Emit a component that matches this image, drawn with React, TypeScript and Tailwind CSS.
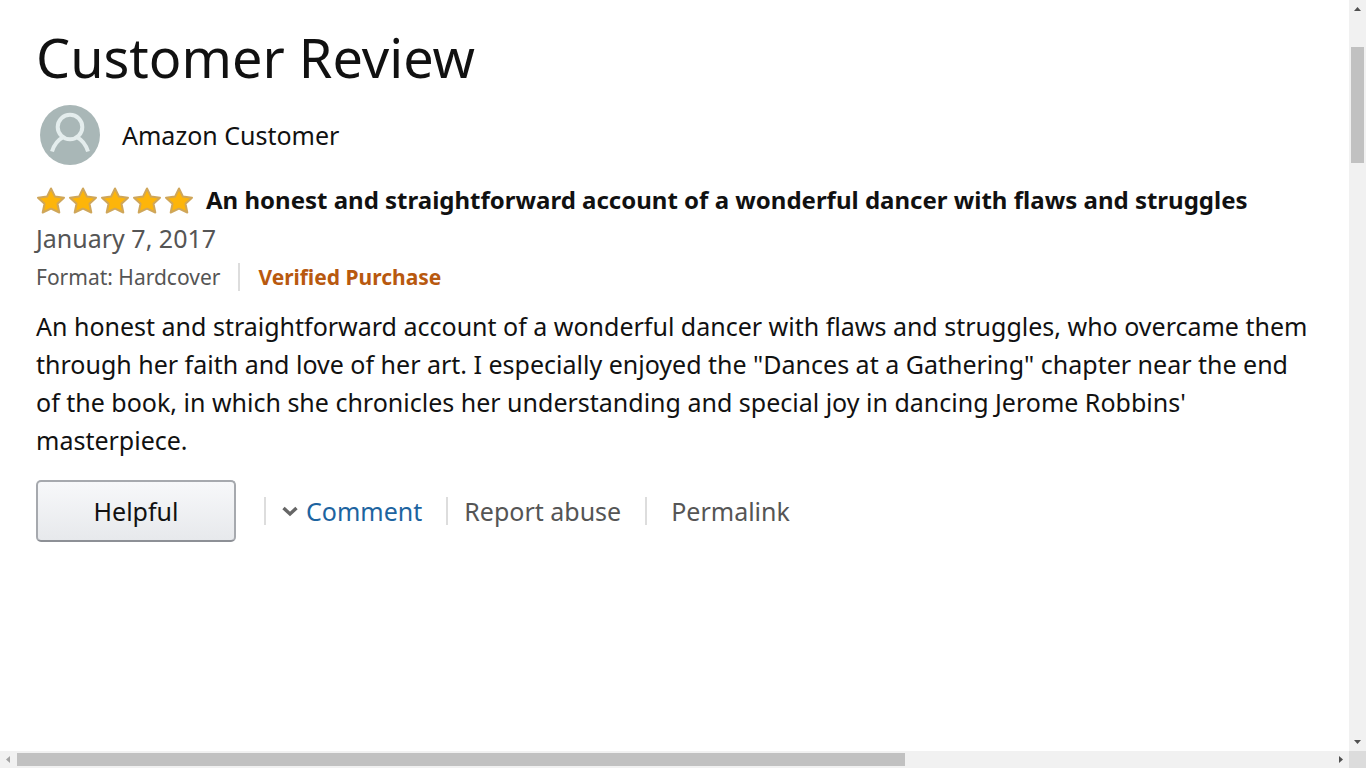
import React from 'react';

const REVIEW = {
  author: 'Amazon Customer',
  title: 'An honest and straightforward account of a wonderful dancer with flaws and struggles',
  date: 'January 7, 2017',
  format: 'Format: Hardcover',
  rating: 5,
  body: 'An honest and straightforward account of a wonderful dancer with flaws and struggles, who overcame them through her faith and love of her art. I especially enjoyed the "Dances at a Gathering" chapter near the end of the book, in which she chronicles her understanding and special joy in dancing Jerome Robbins\' masterpiece.',
};

const Avatar = () => (
  <svg className="h-[60px] w-[60px] shrink-0" viewBox="0 0 60 60" fill="none" aria-hidden="true">
    <circle cx="30" cy="30" r="30" fill="#a9b7b7" />
    <circle cx="30" cy="22" r="12.300" stroke="#e4eded" strokeWidth="4" />
    <path d="M12 46.500C14 40 17.500 35 23.500 32M48 46.500C46 40 42.500 35 36.500 32" stroke="#e4eded" strokeWidth="4" />
  </svg>
);

const Star = () => (
  <svg className="h-8 w-8" viewBox="0 0 32 32" aria-hidden="true">
    <path
      d="M15 4.500L19 12.600L28 13.700L21.500 19.800L23.300 28.500L15 24.700L6.700 28.500L8.500 19.800L2 13.700L11 12.600Z"
      fill="#fdb50a"
      stroke="#cfa65a"
      strokeWidth="2"
      strokeLinejoin="round"
    />
  </svg>
);

const Divider = () => <span className="h-7 w-0.5 bg-[#dddddd]" />;

const VerticalScrollbar = () => (
  <div className="flex w-[17px] shrink-0 flex-col items-center bg-[#f1f1f1]" aria-hidden="true">
    <svg className="h-[17px] w-[17px]" viewBox="0 0 17 17">
      <path d="M5 11L8.500 7L12 11Z" fill="#505050" />
    </svg>
    <div className="mt-[30px] h-[116px] w-[13px] bg-[#c1c1c1]" />
    <svg className="mt-auto h-[17px] w-[17px]" viewBox="0 0 17 17">
      <path d="M5 6L8.500 10L12 6Z" fill="#505050" />
    </svg>
  </div>
);

const HorizontalScrollbar = () => (
  <div className="flex h-[17px] shrink-0 items-center bg-[#f1f1f1]" aria-hidden="true">
    <svg className="h-[17px] w-[17px] shrink-0" viewBox="0 0 17 17">
      <path d="M10 5L6 8.500L10 12Z" fill="#a3a3a3" />
    </svg>
    <div className="flex-1">
      <div className="h-[13px] w-[67.5%] bg-[#c1c1c1]" />
    </div>
    <svg className="h-[17px] w-[17px] shrink-0" viewBox="0 0 17 17">
      <path d="M7 5L11 8.500L7 12Z" fill="#505050" />
    </svg>
    <div className="h-[17px] w-[17px] shrink-0 bg-[#dcdcdc]" />
  </div>
);

const App: React.FC = () => {
  return (
    <div className="flex h-screen flex-col bg-white font-['Noto_Sans',sans-serif] text-[25px] leading-[38px] text-[#111111]">
      <div className="flex min-h-0 flex-1">
        <main className="min-w-0 flex-1 overflow-hidden pt-[22px] pr-9 pl-9">
          <h1 className="text-[54px] leading-[70px]">Customer Review</h1>

          <div className="mt-[13px] flex items-center gap-[22px] pl-1">
            <Avatar />
            <span>{REVIEW.author}</span>
          </div>

          <div className="mt-4 flex items-center gap-[10px]">
            <div className="flex" role="img" aria-label="5 out of 5 stars">
              {Array.from({ length: REVIEW.rating }, (_, i) => (
                <Star key={i} />
              ))}
            </div>
            <h2 className="text-[24px] font-bold whitespace-nowrap">{REVIEW.title}</h2>
          </div>

          <div className="text-[#555555]">{REVIEW.date}</div>

          <div className="flex items-center gap-[18px] text-[21px] leading-10 text-[#555555]">
            <span>{REVIEW.format}</span>
            <Divider />
            <span className="font-bold text-[#b8590f]">Verified Purchase</span>
          </div>

          <p className="mt-[10px]">{REVIEW.body}</p>

          <div className="mt-[21px] flex items-center text-[#555555]">
            <button
              type="button"
              className="mr-7 h-[62px] w-[200px] rounded-[5px] border-2 border-[#a6a9ae] border-b-[#8d9096] bg-linear-to-b from-[#f7f8fa] to-[#e7e9ec] text-[#111111]"
            >
              Helpful
            </button>
            <Divider />
            <a href="#comment" className="mr-6 ml-4 flex items-center gap-2 text-[#1d64a0]">
              <svg className="h-4 w-4" viewBox="0 0 16 16" fill="none" aria-hidden="true">
                <path d="M1.500 5L8 11L14.500 5" stroke="#666666" strokeWidth="3.400" />
              </svg>
              Comment
            </a>
            <Divider />
            <a href="#report" className="mr-6 ml-4">Report abuse</a>
            <Divider />
            <a href="#permalink" className="ml-6">Permalink</a>
          </div>
        </main>
        <VerticalScrollbar />
      </div>
      <HorizontalScrollbar />
    </div>
  );
};

export default App;
